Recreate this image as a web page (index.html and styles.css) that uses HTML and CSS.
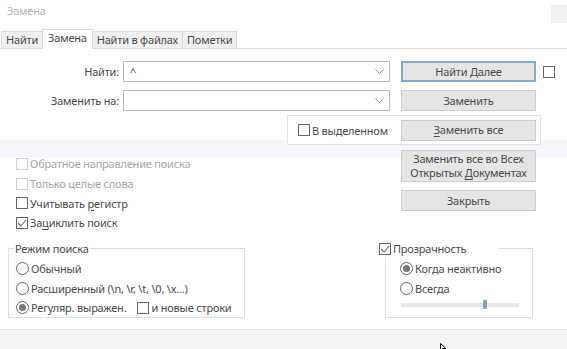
FILE: index.html
```html
<!DOCTYPE html>
<html>

<head>
    <meta charset="utf-8">
    <meta name="viewport" content="width=device-width">
    <title>Замена</title>
    <link rel="stylesheet" href="styles.css">
</head>

<body>
    <div class="window">
        <div class="titlebar">
            <span class="title">Замена</span>
            <span class="title-btn"></span>
        </div>
        <ul class="tabs">
            <li class="tab">Найти</li>
            <li class="tab active">Замена</li>
            <li class="tab">Найти в файлах</li>
            <li class="tab">Пометки</li>
        </ul>

        <div class="content">
            <div class="row">
                <label class="field-label">Найти:</label>
                <div class="combo">
                    <span class="combo-text">^</span>
                    <svg class="chevron" width="9" height="5" viewBox="0 0 9 5"><polyline points="0.5,0.5 4.5,4.5 8.5,0.5" /></svg>
                </div>
                <button class="btn default">Найти Далее</button>
                <span class="box row-box"></span>
            </div>
            <div class="row row-second">
                <label class="field-label">Заменить на:</label>
                <div class="combo">
                    <span class="combo-text"></span>
                    <svg class="chevron" width="9" height="5" viewBox="0 0 9 5"><polyline points="0.5,0.5 4.5,4.5 8.5,0.5" /></svg>
                </div>
                <button class="btn">Заменить</button>
            </div>
            <div class="selection-box">
                <label class="check"><span class="box"></span><span>В выделенном</span></label>
                <button class="btn"><u>З</u>аменить все</button>
            </div>

            <div class="middle">
                <div class="options">
                    <label class="check disabled"><span class="box"></span><span>Обратное направление поиска</span></label>
                    <label class="check disabled"><span class="box"></span><span>Только целые слова</span></label>
                    <label class="check"><span class="box"></span><span>Учитывать <u>р</u>егистр</span></label>
                    <label class="check"><span class="box checked"><svg width="10" height="10" viewBox="0 0 10 10"><polyline points="1,5 4,8 9,2" /></svg></span><span>За<u>ц</u>иклить поиск</span></label>
                </div>
                <div class="side-buttons">
                    <button class="btn tall">Заменить все во Всех<br>Открытых <u>Д</u>окументах</button>
                    <button class="btn">Закрыть</button>
                </div>
            </div>

            <div class="bottom">
                <fieldset class="group mode">
                    <legend>Режим поиска</legend>
                    <label class="check"><span class="radio"></span><span>Обычный</span></label>
                    <label class="check"><span class="radio"></span><span>Расширенный (\n, \r, \t, \0, \x...)</span></label>
                    <div class="check-line">
                        <label class="check"><span class="radio on"></span><span>Регуляр. выражен.</span></label>
                        <label class="check newline"><span class="box"></span><span>и новые строки</span></label>
                    </div>
                </fieldset>
                <fieldset class="group transparency">
                    <legend><label class="check"><span class="box checked"><svg width="10" height="10" viewBox="0 0 10 10"><polyline points="1,5 4,8 9,2" /></svg></span><span>Прозрачность</span></label></legend>
                    <label class="check"><span class="radio on"></span><span>Когда неактивно</span></label>
                    <label class="check"><span class="radio"></span><span>Всегда</span></label>
                    <div class="slider"><span class="thumb"></span></div>
                </fieldset>
            </div>
        </div>

        <div class="statusbar">
            <svg class="cursor" width="7" height="9" viewBox="0 0 7 9"><path d="M0.5 0.5 L0.5 7.5 L2.5 5.5 L6 5.5 Z" /></svg>
        </div>
    </div>
</body>

</html>
```

FILE: styles.css
```css
body {
    margin: 0;
    font-family: "Noto Sans", "Open Sans", sans-serif;
    font-size: 11px;
    letter-spacing: -0.2px;
    color: #4a4a4a;
    background: #fff linear-gradient(to bottom, transparent 140px, #f3f5fb 140px, #f5f7fc 157px, transparent 157px);
}

.window {
    height: 349px;
    display: flex;
    flex-direction: column;
    overflow: hidden;
}

/* title */
.titlebar {
    height: 29px;
    display: flex;
    justify-content: space-between;
    align-items: flex-start;
    padding-left: 7px;
}

.title {
    color: #b4b4b4;
    line-height: 22px;
}

.title-btn {
    margin-top: 5px;
    width: 16px;
    height: 18px;
    background: #efefef;
}

/* tabs */
.tabs {
    list-style: none;
    margin: 0;
    padding: 0 0 0 1px;
    height: 19px;
    display: flex;
    align-items: flex-end;
    border-bottom: 1px solid #dedede;
}

.tab {
    height: 16px;
    line-height: 16px;
    padding: 0 4px;
    border: 1px solid #d9d9d9;
    border-bottom: none;
    background: #f0f0f0;
    margin-right: -1px;
}

.tab.active {
    height: 19px;
    line-height: 16px;
    background: #fff;
    margin-bottom: -1px;
    position: relative;
    z-index: 1;
    padding: 0 5px;
}

/* form rows */
.content {
    padding-top: 12px;
}

.row {
    display: flex;
    align-items: center;
    height: 21px;
}

.row-second {
    margin-top: 8px;
}

.field-label {
    width: 119px;
    text-align: right;
}

.combo {
    margin-left: 4px;
    width: 267px;
    height: 21px;
    box-sizing: border-box;
    border: 1px solid #bababa;
    display: flex;
    align-items: center;
    padding: 0 5px 0 6px;
}

.combo-text {
    flex: 1;
}

.chevron polyline {
    fill: none;
    stroke: #9a9a9a;
    stroke-width: 1;
}

.btn {
    margin-left: 11px;
    width: 135px;
    height: 21px;
    box-sizing: border-box;
    padding: 0;
    background: #e5e5e5;
    border: 1px solid #cdcdcd;
    font: inherit;
    letter-spacing: inherit;
    color: inherit;
    line-height: 14px;
}

.btn.default {
    border: 2px solid #84aacb;
}

.btn.tall {
    height: 32px;
}

.btn u,
.check u {
    text-decoration: underline;
    text-underline-offset: 2px;
}

/* check boxes and radios */
.box {
    display: inline-flex;
    align-items: center;
    justify-content: center;
    width: 12px;
    height: 12px;
    box-sizing: border-box;
    border: 1px solid #666;
    background: #fff;
    margin-right: 2px;
    flex: none;
}

.box svg polyline {
    fill: none;
    stroke: #666;
    stroke-width: 1.1;
}

.row-box {
    margin-left: 7px;
}

.radio {
    display: inline-flex;
    align-items: center;
    justify-content: center;
    width: 13px;
    height: 13px;
    box-sizing: border-box;
    border: 1px solid #666;
    border-radius: 50%;
    margin-right: 2px;
    flex: none;
}

.radio.on::after {
    content: "";
    width: 7px;
    height: 7px;
    border-radius: 50%;
    background: #777;
}

.check {
    display: flex;
    align-items: center;
    height: 19.7px;
    white-space: nowrap;
}

.check.disabled {
    color: #a6a6a6;
}

.check.disabled .box {
    border-color: #d2d2d2;
}

.selection-box {
    margin: 4px 0 0 287px;
    width: 254px;
    height: 30px;
    box-sizing: border-box;
    border: 1px solid #e2e2e2;
    background: #fff;
    display: flex;
    align-items: center;
    justify-content: space-between;
    padding: 0 4px 0 10px;
}

.selection-box .btn {
    margin-left: 0;
}

/* middle part */
.middle {
    display: flex;
    margin-top: 5px;
}

.options {
    width: 401px;
    box-sizing: border-box;
    padding: 4px 0 0 16px;
}

.side-buttons {
    display: flex;
    flex-direction: column;
    gap: 8px;
}

.side-buttons .btn {
    margin-left: 0;
}

/* group boxes */
.bottom {
    display: flex;
    align-items: flex-start;
    margin-top: 8px;
}

.group {
    margin: 0;
    border: 1px solid #dedede;
    box-sizing: border-box;
}

.group legend {
    padding: 0 1px;
    line-height: 16px;
}

.mode {
    margin-left: 8px;
    width: 237px;
    height: 77px;
    padding: 2px 0 0 7px;
}

.mode legend {
    margin-left: -2px;
}

.check-line {
    display: flex;
}

.newline {
    margin-left: 11px;
}

.transparency {
    margin-left: 140px;
    width: 148px;
    height: 77px;
    padding: 2px 0 0 14px;
}

.transparency legend {
    margin-left: -21px;
    padding: 0 33px 0 0;
}

.transparency legend .check {
    height: 16px;
}

.slider {
    position: relative;
    margin: 5px 0 0 1px;
    width: 118px;
    height: 4px;
    background: #e8e8e8;
}

.thumb {
    position: absolute;
    left: 82px;
    top: -3px;
    width: 4px;
    height: 9px;
    background: #7fa6c8;
}

/* status bar */
.statusbar {
    margin-top: auto;
    height: 19px;
    border-top: 1px solid #e4e4e4;
    background: #f4f4f4;
    position: relative;
}

.cursor {
    position: absolute;
    left: 440px;
    top: 13px;
}

.cursor path {
    fill: #fff;
    stroke: #000;
    stroke-width: 1;
}
```
